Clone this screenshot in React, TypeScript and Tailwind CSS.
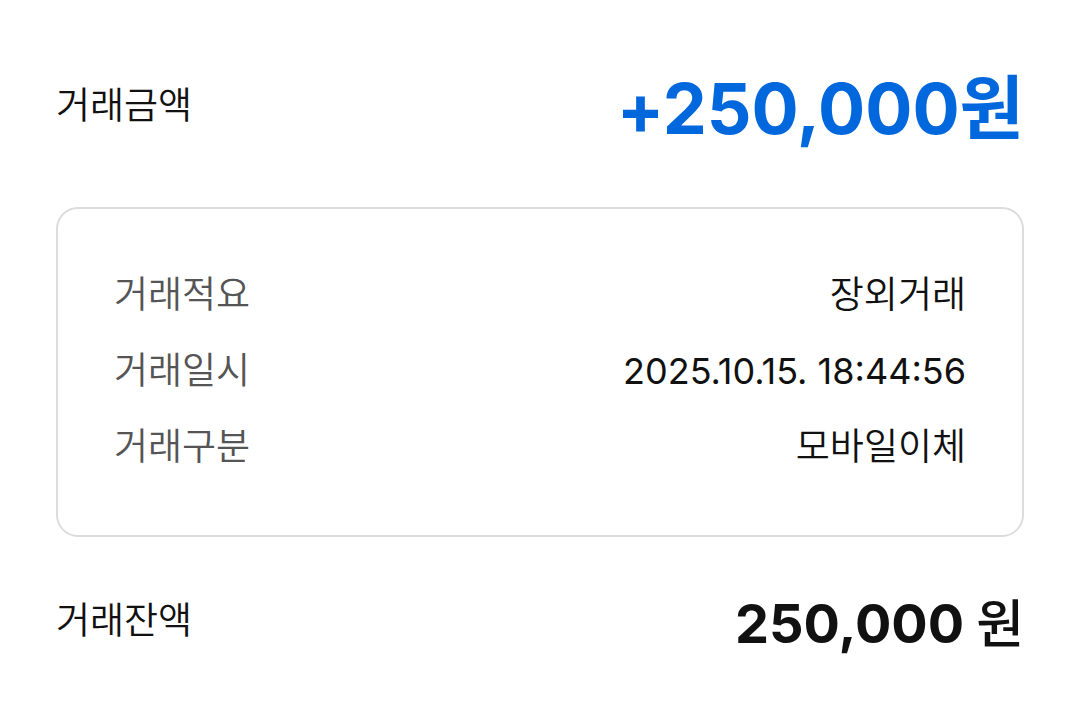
interface DetailRow {
  label: string
  value: string
}

const details: DetailRow[] = [
  { label: '거래적요', value: '장외거래' },
  { label: '거래일시', value: '2025.10.15. 18:44:56' },
  { label: '거래구분', value: '모바일이체' },
]

export default function App() {
  return (
    <main className="min-h-screen bg-white px-14 py-[55px] font-['Inter','Noto_Sans_CJK_KR',sans-serif] text-[37px] leading-[52px] font-[350] text-[#111]">
      {/* 거래금액 */}
      <div className="flex items-start justify-between">
        <span className="leading-[102px]">거래금액</span>
        <strong className="text-[70px] leading-[108px] font-bold text-[#0067dd]">+250,000원</strong>
      </div>

      {/* 거래 상세 */}
      <dl className="mt-11 flex flex-col gap-6 rounded-[22px] border-2 border-[#dcdcdc] px-14 pt-[60px] pb-[62px]">
        {details.map((row) => (
          <div key={row.label} className="flex items-center justify-between">
            <dt className="text-[#555]">{row.label}</dt>
            <dd className={/^\d/.test(row.value) ? 'text-[36px] font-normal' : ''}>{row.value}</dd>
          </div>
        ))}
      </dl>

      {/* 거래잔액 */}
      <div className="mt-12 flex items-start justify-between">
        <span className="leading-[72px]">거래잔액</span>
        <span className="flex items-baseline gap-3 text-[54px] leading-[78px]">
          <strong className="font-bold">250,000</strong>
          <span className="text-[52px] font-medium">원</span>
        </span>
      </div>
    </main>
  )
}
